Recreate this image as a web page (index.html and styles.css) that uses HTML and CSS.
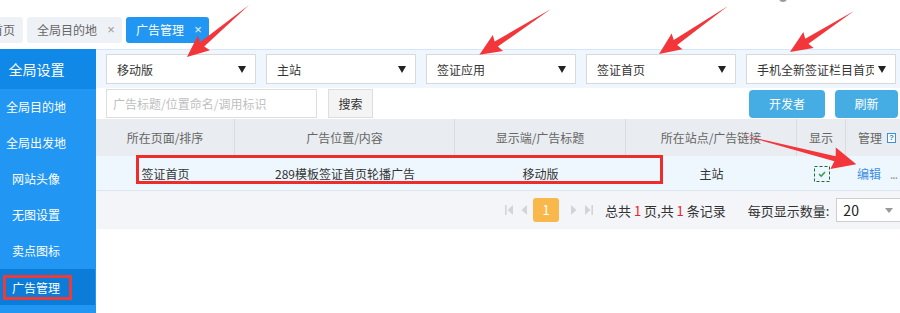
FILE: index.html
```html
<!DOCTYPE html>
<html lang="zh-CN">
<head>
<meta charset="utf-8">
<title>广告管理</title>
<link rel="stylesheet" href="styles.css">
</head>
<body>
<div class="app">
  <div class="tabbar">
    <div class="tabs">
      <div class="tab first">首页</div>
      <div class="tab">全局目的地<span class="x">×</span></div>
      <div class="tab active">广告管理<span class="x">×</span></div>
    </div>
  </div>
  <div class="layout">
    <aside class="side">
      <div class="side-head">全局设置</div>
      <div class="side-item">全局目的地</div>
      <div class="side-item">全局出发地</div>
      <div class="side-item">网站头像</div>
      <div class="side-item">无图设置</div>
      <div class="side-item">卖点图标</div>
      <div class="side-item active"><span class="mark">广告管理</span></div>
    </aside>
    <main class="main">
      <div class="filters">
        <div class="select"><span class="sel-text">移动版</span><i class="caret"></i></div>
        <div class="select"><span class="sel-text">主站</span><i class="caret"></i></div>
        <div class="select"><span class="sel-text">签证应用</span><i class="caret"></i></div>
        <div class="select"><span class="sel-text">签证首页</span><i class="caret"></i></div>
        <div class="select"><span class="sel-text">手机全新签证栏目首页</span><i class="caret"></i></div>
      </div>
      <div class="toolbar">
        <div class="search-input">广告标题/位置命名/调用标识</div>
        <div class="btn-search">搜索</div>
        <div class="spacer"></div>
        <div class="btn-blue dev">开发者</div>
        <div class="btn-blue refresh">刷新</div>
      </div>
      <div class="grid thead">
        <div class="th">所在页面/排序</div>
        <div class="th">广告位置/内容</div>
        <div class="th">显示端/广告标题</div>
        <div class="th">所在站点/广告链接</div>
        <div class="th">显示</div>
        <div class="th th-left">管理 <span class="help">?</span></div>
      </div>
      <div class="grid trow">
        <div class="td">签证首页</div>
        <div class="td">289模板签证首页轮播广告</div>
        <div class="td">移动版</div>
        <div class="td">主站</div>
        <div class="td">
          <svg class="chk" width="16" height="16" viewBox="0 0 16 16">
            <rect x="0.5" y="0.5" width="15" height="15" fill="none" stroke="#1f6b35" stroke-width="1" stroke-dasharray="3 2"/>
            <polyline points="5,8 7.2,10.2 11,6" fill="none" stroke="#3a9b50" stroke-width="1.6"/>
          </svg>
        </div>
        <div class="td td-left"><span class="link">编辑</span><span class="more">...</span></div>
        <div class="annot"></div>
      </div>
      <div class="pager">
        <svg class="pg" width="10" height="12" viewBox="0 0 10 12"><rect x="1" y="1" width="1.6" height="10" fill="#d4d4d8"/><polygon points="9,1 9,11 3.5,6" fill="#d4d4d8"/></svg>
        <svg class="pg" width="8" height="12" viewBox="0 0 8 12"><polygon points="7,1 7,11 1.5,6" fill="#d4d4d8"/></svg>
        <span class="page-no">1</span>
        <svg class="pg" width="8" height="12" viewBox="0 0 8 12"><polygon points="1,1 1,11 6.5,6" fill="#d4d4d8"/></svg>
        <svg class="pg" width="10" height="12" viewBox="0 0 10 12"><polygon points="1,1 1,11 6.5,6" fill="#d4d4d8"/><rect x="7.4" y="1" width="1.6" height="10" fill="#d4d4d8"/></svg>
        <span class="total">总共 <b>1</b> 页,共 <b>1</b> 条记录</span>
        <span class="per">每页显示数量:</span>
        <div class="per-select"><span>20</span><i class="caret-gray"></i></div>
      </div>
    </main>
  </div>
  <svg class="arrows" width="900" height="313" viewBox="0 0 900 313">
    <circle cx="783" cy="-2" r="4" fill="#9a9a9a"/>
    <polygon transform="translate(249,5) rotate(140)" points="0,0 61,-3 59,-9.5 81,0 59,9.5 61,3" fill="#f2363a"/>
    <polygon transform="translate(551,9) rotate(147.4)" points="0,0 65,-3 63,-9.5 85,0 63,9.5 65,3" fill="#f2363a"/>
    <polygon transform="translate(728,6) rotate(145.2)" points="0,0 64,-3 62,-9.5 84,0 62,9.5 64,3" fill="#f2363a"/>
    <polygon transform="translate(854,11) rotate(147.4)" points="0,0 56,-3 54,-9.5 76,0 54,9.5 56,3" fill="#f2363a"/>
    <polygon transform="translate(742,135) rotate(14.3)" points="0,0 96,-2.6 94,-11 118,0 94,11 96,2.6" fill="#f2363a"/>
  </svg>
</div>
</body>
</html>
```
FILE: styles.css
```css
* { box-sizing: border-box; }
html, body { margin: 0; padding: 0; background: #fff; }
body {
  font-family: "Noto Sans CJK SC", "Noto Sans", sans-serif;
  font-size: 12px;
  color: #333;
  width: 900px;
  height: 313px;
  overflow: hidden;
}
.app { position: relative; width: 900px; height: 313px; overflow: hidden; }

/* tabs */
.tabbar { height: 49px; padding-top: 17px; overflow: hidden; }
.tabs { display: flex; gap: 4px; margin-left: -19px; }
.tab {
  height: 26px;
  line-height: 26px;
  padding: 0 7px 0 10px;
  background: #eef1f6;
  color: #666;
  border-radius: 3px;
  white-space: nowrap;
  display: flex;
  align-items: center;
  flex: none;
}
.tab.first { padding-right: 8px; }
.tab .x {
  display: inline-block;
  width: 8px;
  margin-left: 10px;
  text-align: center;
  font-family: "Liberation Sans", sans-serif;
  font-size: 13px;
  color: #999;
}
.tab.active { background: #2196f3; color: #fff; }
.tab.active .x { color: #e6f2fe; }

/* layout */
.layout { display: flex; height: 264px; }
.side { width: 96px; flex: none; background: #2196f3; color: #fff; }
.side-head {
  height: 40px;
  line-height: 40px;
  background: #1088e8;
  font-size: 14px;
  padding-right: 23px;
  text-align: center;
  white-space: nowrap;
}
.side-item {
  height: 36px;
  line-height: 36px;
  padding-right: 23px;
  text-align: center;
  font-size: 12px;
  width: 95px;
  white-space: nowrap;
}
.side-item.active { background: #0b7dd8; line-height: 30px; padding-top: 6px; }
.mark {
  display: inline-block;
  line-height: 17px;
  padding: 1px 9px 1px 6px;
  border: 3px solid #ef3a3a;
  margin-left: 3px;
  vertical-align: top;
}

.main { flex: 1; min-width: 0; }

/* filters */
.filters {
  display: flex;
  gap: 10px;
  padding: 4px 10px 4px 10px;
  background: #f0f6fd;
  border-top: 1px solid #d6e5f5;
  height: 39px;
}
.select {
  width: 150px;
  height: 30px;
  flex: none;
  border: 1px solid #d9d9d9;
  background: #fff;
  display: flex;
  align-items: center;
  padding: 0 9px 0 10px;
}
.sel-text { flex: 1; overflow: hidden; white-space: nowrap; color: #333; }
.caret {
  flex: none;
  width: 0; height: 0;
  border-left: 4px solid transparent;
  border-right: 4px solid transparent;
  border-top: 7px solid #222;
  margin-left: 4px;
}

/* toolbar */
.toolbar {
  height: 31px;
  display: flex;
  align-items: flex-start;
  padding: 1px 2px 0 10px;
}
.search-input {
  width: 211px;
  height: 29px;
  border: 1px solid #dedede;
  line-height: 27px;
  padding-left: 6px;
  color: #c0c0c0;
  flex: none;
}
.btn-search {
  margin-left: 11px;
  width: 45px;
  height: 29px;
  line-height: 27px;
  text-align: center;
  background: #f4f4f4;
  border: 1px solid #dedede;
  color: #333;
  flex: none;
}
.spacer { flex: 1; }
.btn-blue {
  height: 28px;
  line-height: 28px;
  margin-top: 1px;
  text-align: center;
  background: #45ade3;
  color: #fff;
  border-radius: 4px;
  flex: none;
}
.btn-blue.dev { width: 76px; }
.btn-blue.refresh { width: 63px; margin-left: 10px; }

/* table */
.grid { display: grid; grid-template-columns: 139px 220px 171px 171px 49px 1fr; }
.thead { height: 37px; background: #e9ecf0; color: #666; }
.th {
  display: flex; align-items: center; justify-content: center;
  border-right: 1px solid #d9dde2;
  white-space: nowrap;
}
.th:last-child { border-right: none; }
.th-left { justify-content: flex-start; padding-left: 12px; }
.help {
  display: inline-block;
  width: 9px; height: 10px;
  margin-left: 5px;
  border: 1px solid #3b8fe0;
  color: #2b7fd8;
  background: #fff;
  font-family: "Liberation Sans", sans-serif;
  font-weight: bold;
  font-size: 8px;
  line-height: 8px;
  text-align: center;
}
.trow {
  position: relative;
  height: 35px;
  background: #eef7fe;
  border-bottom: 1px solid #dfe5ec;
}
.td { display: flex; align-items: center; justify-content: center; white-space: nowrap; color: #333; }
.td-left { justify-content: flex-start; padding-left: 11px; overflow: hidden; }
.link { color: #3d8ee3; }
.more { color: #999; margin-left: 9px; letter-spacing: -1px; }
.chk { display: block; margin-top: 2px; margin-left: 1px; }
.annot {
  position: absolute;
  left: 40px;
  top: -1px;
  width: 527px;
  height: 29px;
  border: 3px solid #ee2c2c;
  pointer-events: none;
}

/* pager */
.pager {
  height: 38px;
  background: #f4f5f9;
  display: flex;
  align-items: center;
  padding-left: 408px;
  font-size: 13px;
  white-space: nowrap;
}
.pager > * { flex: none; }
.pg { display: block; }
.pager .pg:nth-of-type(1) { margin-right: 6px; }
.pager .pg:nth-of-type(2) { margin-right: 5px; }
.pager .pg:nth-of-type(3) { margin-left: 11px; margin-right: 6px; }
.page-no {
  width: 26px; height: 24px;
  line-height: 24px;
  text-align: center;
  border-radius: 3px;
  background: #f8b84c;
  color: #fff;
  font-size: 13px;
}
.total { margin-left: 11px; color: #333; }
.total b { font-weight: normal; color: #f02020; }
.per { margin-left: 22px; color: #333; }
.per-select {
  margin-left: 7px;
  width: 70px;
  height: 24px;
  border: 1px solid #cfcfcf;
  background: #fff;
  display: flex;
  align-items: center;
  padding-left: 6px;
  font-size: 14px;
  color: #222;
}
.per-select span { width: 42px; }
.caret-gray {
  width: 0; height: 0;
  border-left: 4px solid transparent;
  border-right: 4px solid transparent;
  border-top: 5px solid #999;
}

.arrows { position: absolute; left: 0; top: 0; pointer-events: none; overflow: visible; }
```
